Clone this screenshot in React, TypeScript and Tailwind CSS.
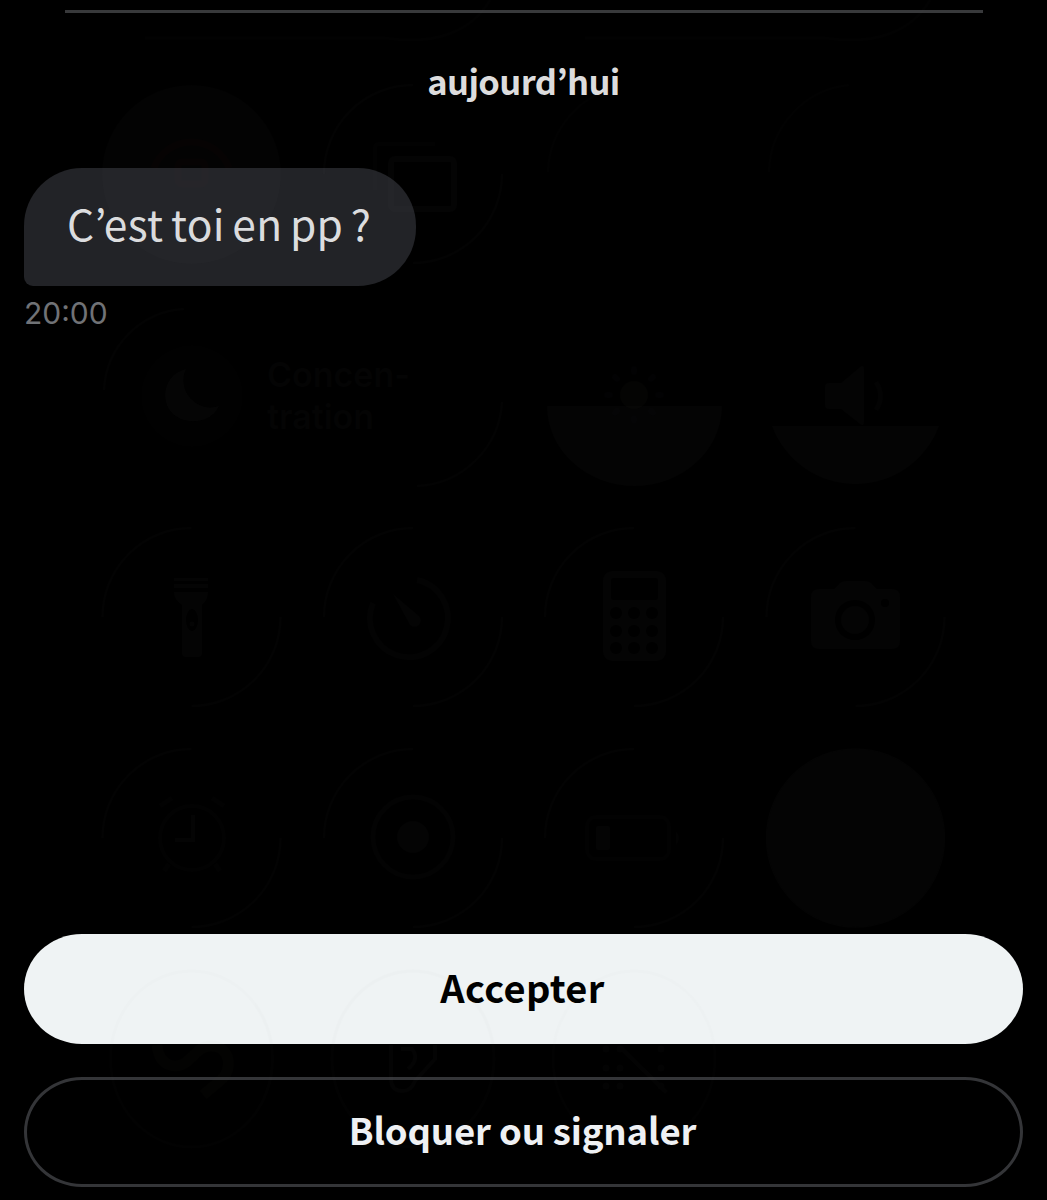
import type { ReactNode } from 'react';

const COLS = [191.5, 413, 634, 855.5];

// highlight arcs on the upper left and lower right of a round control
function Rim({ x, y, opacity = 0.024 }: { x: number; y: number; opacity?: number }) {
  return (
    <path
      d={`M${x - 89} ${y}a89 89 0 0 1 89-89M${x + 89} ${y}a89 89 0 0 1-89 89`}
      fill="none"
      stroke="#808080"
      strokeWidth="2.500"
      opacity={opacity}
    />
  );
}

function ControlCenterGhost() {
  return (
    <svg
      className="pointer-events-none absolute inset-0"
      width="1047"
      height="1200"
      viewBox="0 0 1047 1200"
      fill="none"
      aria-hidden="true"
    >
      <g stroke="#808080" strokeWidth="3" opacity="0.016">
        <path d="M145 38h240c52 8 88-8 105-38M585 38h240c52 8 88-8 105-38" />
      </g>

      {/* orientation lock and screen mirroring */}
      <circle cx="191.5" cy="174.5" r="89.500" fill="#a0a0a0" opacity="0.02" />
      <g stroke="#a03030" strokeWidth="7" opacity="0.016">
        <path d="M154 168a40 40 0 0 1 75 0" />
        <rect x="178" y="162" width="27" height="22" rx="4" />
      </g>
      <g stroke="#808080" strokeWidth="6" opacity="0.026">
        <rect x="391" y="159" width="63" height="50" rx="4" />
        <path d="M375 190v-42q0-4 4-4h56" strokeWidth="4" opacity="0.6" />
      </g>
      <Rim x={COLS[1]} y={174} opacity={0.018} />
      <path d="M548 172a89 89 0 0 1 60-82M769 172a89 89 0 0 1 80-87" stroke="#808080" strokeWidth="2.500" opacity="0.016" />

      {/* focus */}
      <path d="M104 390a85 85 0 0 1 80-81M502 402a89 89 0 0 1-85 84" stroke="#808080" strokeWidth="2.500" opacity="0.022" />
      <circle cx="192" cy="396" r="51" fill="#808080" opacity="0.009" />
      <path d="M186 369a27 27 0 0 0 33 37c-6 13-21 18-35 14-17-5-23-23-16-37 4-8 10-12 18-14z" fill="#808080" opacity="0.036" />

      {/* brightness */}
      <path d="M547 406h175a87.500 80 0 0 1-175 0z" fill="#808080" opacity="0.026" />
      <circle cx="634" cy="395" r="14" fill="#807850" opacity="0.03" />
      <g stroke="#8080b0" strokeWidth="6" strokeLinecap="round" opacity="0.016">
        <path d="M634 369v3M653 377l-2 2M661 395h-3M653 413l-2-2M634 421v-3M615 413l2-2M607 395h3M615 377l2 2" />
      </g>

      {/* volume */}
      <path d="M772 426h167a89 89 0 0 1-167 0z" fill="#808080" opacity="0.026" />
      <path d="M829 383h12l19-16q4-3 4 2v53q0 5-4 2l-19-15h-12q-4 0-4-4v-18q0-4 4-4z" fill="#808080" opacity="0.026" />
      <path d="M876 382q9 14 0 28" stroke="#808080" strokeWidth="5" opacity="0.018" />

      {COLS.map((x) => (
        <Rim key={x} x={x} y={617} />
      ))}

      {/* flashlight */}
      <g fill="#808080" opacity="0.032">
        <path d="M174 578h34v3h-34zM174 584h34v4h-34z" />
        <path fillRule="evenodd" d="M174 592h34q0 8-6 13v48q0 4-4 4h-12q-4 0-4-4v-48q-8-5-8-13zm18 17a6 11 0 1 0 0 22 6 11 0 1 0 0-22z" />
        <circle cx="192" cy="624" r="2.500" />
      </g>

      {/* timer */}
      <path d="M417 580a39 39 0 1 1-44 23" stroke="#808080" strokeWidth="6" opacity="0.018" />
      <path d="M393 594l26 22a6 6 0 0 1-9 9z" fill="#808080" opacity="0.032" />

      {/* calculator */}
      <rect x="603" y="571" width="63" height="90" rx="9" fill="#808080" opacity="0.028" />
      <g fill="#000">
        <rect x="611" y="578" width="47" height="22" rx="3" />
        {[613, 631, 648].map((y) => [616, 634, 652].map((x) => <circle key={`${x}-${y}`} cx={x} cy={y} r="6" />))}
      </g>

      {/* camera */}
      <path
        fillRule="evenodd"
        d="M819 589h15l6-6q2-2 6-2h19q4 0 6 2l6 6h15q8 0 8 8v44q0 8-8 8h-73q-8 0-8-8v-44q0-8 8-8zm36 11a20 20 0 1 0 0 40 20 20 0 1 0 0-40z"
        fill="#808080"
        opacity="0.028"
      />
      <circle cx="855" cy="620" r="14" fill="#808080" opacity="0.028" />
      <circle cx="885" cy="603" r="4" fill="#000" />

      {COLS.slice(0, 3).map((x) => (
        <Rim key={x} x={x} y={838} opacity={0.018} />
      ))}

      {/* alarm */}
      <g stroke="#808080" opacity="0.03">
        <circle cx="192" cy="838" r="32" strokeWidth="4" opacity="0.5" />
        <path d="M193 815v25h-18" strokeWidth="4" />
        <path d="M160 806l12-8M224 806l-12-8M169 864l-5 7M215 864l5 7" strokeWidth="5" opacity="0.5" />
      </g>

      {/* screen recording */}
      <circle cx="413" cy="837" r="40" stroke="#808080" strokeWidth="5" opacity="0.018" />
      <circle cx="413" cy="837" r="16" fill="#808080" opacity="0.032" />

      {/* low power */}
      <rect x="587" y="817" width="82" height="42" rx="9" stroke="#808080" strokeWidth="4" opacity="0.016" />
      <rect x="596" y="826" width="14" height="24" rx="2" fill="#808080" opacity="0.026" />
      <path d="M676 831q6 7 0 14z" fill="#808080" opacity="0.02" />

      <circle cx="855.500" cy="838" r="89" fill="#808080" stroke="#808080" strokeWidth="1.500" opacity="0.028" />

      {/* last row shows through both buttons */}
      <g stroke="#808080" strokeWidth="3" opacity="0.016">
        {COLS.slice(0, 3).map((x) => (
          <ellipse key={x} cx={x} cy="1059" rx="81" ry="88" />
        ))}
      </g>
      <path
        d="M157 1045q2 20 18 21c16 0 20-20 36-20 20 0 22 24 10 34l-18 15"
        stroke="#908070"
        strokeWidth="11"
        opacity="0.02"
      />
      <path
        d="M391 1045v34q0 12 12 12 8 0 12-10l20-22v-14M401 1049h11q8 10-4 20"
        stroke="#808080"
        strokeWidth="4"
        opacity="0.026"
      />
      <g fill="#808080" opacity="0.022">
        {[1049, 1068, 1086].map((y) => [606, 620, 661].map((x) => <circle key={`${x}-${y}`} cx={x} cy={y} r="3.500" />))}
        <path d="M622 1046l46 45-3 3-46-45z" />
      </g>
    </svg>
  );
}

function ActionButton({ variant, children }: { variant: 'primary' | 'outline'; children: ReactNode }) {
  const styles =
    variant === 'primary'
      ? 'bg-[#eff3f4] text-[38px] tracking-[0.35px] text-black'
      : 'border-[3px] border-[#343538] text-[36.5px] tracking-[-0.15px] text-[#eff1f4]';
  return (
    <button
      type="button"
      className={`flex h-[110px] w-full items-center justify-center rounded-[58px/55px] pr-[2px] pb-[5px] leading-[44px] font-bold ${styles}`}
    >
      {children}
    </button>
  );
}

export default function App() {
  return (
    <main className="relative flex h-[1200px] w-[1047px] flex-col overflow-hidden bg-black px-6 font-['Noto_Sans_CJK_KR','Noto_Sans',sans-serif]">
      <hr className="mx-[40.5px] mt-[10px] h-[2.5px] border-0 bg-[#38393b]" />

      <h2 className="mt-[45px] text-center text-[34.5px] leading-[44px] font-bold tracking-[-0.6px] text-[#dcdcdd]">aujourd’hui</h2>

      <div className="mt-[66.5px] flex h-[118px] w-[392px] items-center rounded-[58px] rounded-bl-[9px] bg-[#222327] pb-[9px] pl-[43px]">
        <p className="text-[42.5px] leading-[50px] tracking-[0.35px] [word-spacing:-2.4px] whitespace-nowrap text-[#dcdddf]">
          C’est toi en pp ?
        </p>
      </div>
      <time className="mt-[9px] font-['Inter',sans-serif] text-[30px] leading-[36px] text-[#707276]">20:00</time>

      {/* control center label */}
      <p className="pointer-events-none absolute top-[354px] left-[267px] font-['Inter',sans-serif] text-[34px] leading-[42px] font-semibold text-[#040404]">
        Concen-
        <br />
        tration
      </p>

      <div className="mt-auto mb-[13px] flex flex-col gap-[33px]">
        <ActionButton variant="primary">Accepter</ActionButton>
        <ActionButton variant="outline">Bloquer ou signaler</ActionButton>
      </div>

      <ControlCenterGhost />
    </main>
  );
}
